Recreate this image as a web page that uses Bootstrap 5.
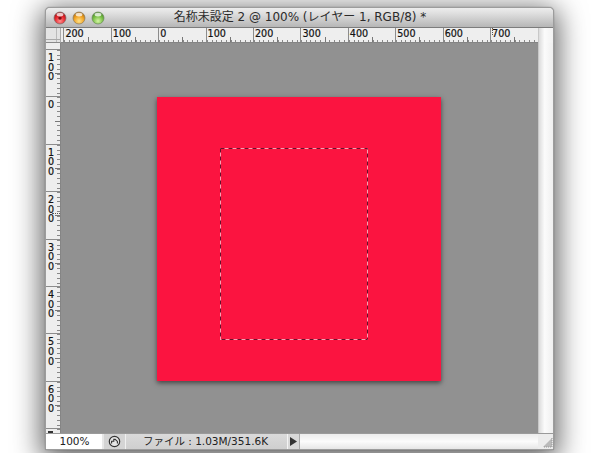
<!DOCTYPE html>
<html lang="ja">
<head>
<meta charset="utf-8">
<title>名称未設定 2</title>
<link href="https://cdn.jsdelivr.net/npm/bootstrap@5.3.0/dist/css/bootstrap.min.css" rel="stylesheet">
<style>
html,body{height:453px;overflow:hidden;background:#fff}
body{font-family:"DejaVu Sans","Noto Sans CJK JP",sans-serif;color:#222}
.ps-win{width:509px;height:443px;margin:7px 0 0 45px;background:#ececec;border-radius:5px 5px 2px 2px;border:1px solid #9c9c9c;box-shadow:0 6px 28px 4px rgba(0,0,0,.62),0 0 1px rgba(0,0,0,.5);position:relative}
.ps-title{height:20px;flex:none;background:linear-gradient(#ededed,#dedede 30%,#b6b6b6);border-bottom:1px solid #7c7c7c;border-radius:4px 4px 0 0;position:relative;font-size:12px;line-height:19px;color:#2b2b2b;text-align:center;padding-left:1px}
.ps-lights{position:absolute;left:7px;top:3px;gap:5px}
.ps-toprow{height:15px;flex:none;background:#ededed}
.ps-corner{width:15px;flex:none;border-right:1px solid #aaa;border-bottom:1px solid #8a8a8a;background:linear-gradient(#aaa,#aaa) 0 11px/15px 1px no-repeat,linear-gradient(#bbb,#bbb) 10px 0/1px 15px no-repeat,#e4e4e4}
.ps-hruler{flex:1 1 auto;overflow:hidden;padding-left:2.4px;border-bottom:1px solid #858585;background:#eeeeee;position:relative}
.ps-hcell{flex:0 0 47.42px;border-left:1px solid #8c8c8c;height:14px;font-size:9.6px;line-height:11px;padding-left:1px;color:#111;-webkit-text-stroke:.2px #111;background:linear-gradient(#777,#777) 23.2px 100%/1px 5px no-repeat,repeating-linear-gradient(90deg,#888 0 1px,transparent 1px 4.742px) 0 100%/100% 2px no-repeat}
.ps-rightcap{width:15px;flex:none;background:linear-gradient(90deg,#dcdcdc,#fbfbfb 40%,#f2f2f2);border-left:1px solid #c8c8c8}
.ps-mid{flex:1 1 auto;min-height:0}
.ps-vruler{width:15px;flex:none;overflow:hidden;background:#eeeeee;border-right:1px solid #858585;position:relative}
.ps-vcell{flex:0 0 47.42px;border-top:1px solid #8c8c8c;font-size:9.6px;line-height:9.6px;padding:3px 0 0 2px;color:#111;-webkit-text-stroke:.2px #111;background:linear-gradient(#777,#777) 100% 23.2px/5px 1px no-repeat,repeating-linear-gradient(#888 0 1px,transparent 1px 4.742px) 100% 0/3px 100% no-repeat}
.ps-vfirst{margin-top:6px}
.ps-seven{width:5px;height:2px;background:#333;margin-top:-1px}
.ps-canvas{flex:1 1 auto;background:#919191;padding:54px 0 0 96px;min-width:0}
.ps-art{width:284px;height:284px;background:#fb1440;box-shadow:0 2px 5px rgba(0,0,0,.55);padding:51px 0 0 63px}
.ps-marquee{width:148px;height:192px;display:block}
.ps-scroll{width:15px;flex:none;background:linear-gradient(90deg,#dcdcdc,#fbfbfb 40%,#f0f0f0);border-left:1px solid #c8c8c8}
.ps-status{height:16px;flex:none;background:#f0f0f0;border-top:1px solid #9a9a9a;font-size:10.5px;line-height:15px;color:#222}
.ps-zoomcell{width:56px;background:#fff;text-align:center;padding-left:1px}
.ps-gap{width:2px;background:#e8e8e8}
.ps-iconcell{width:21px;background:#d4d4d4}
.ps-filecell{width:161px;background:linear-gradient(#dadada,#cfcfcf);text-align:center;margin-left:1px;padding-right:2px}
.ps-arrowcell{width:13px;background:#d8d8d8;border-left:1px solid #f4f4f4;border-right:1px solid #aaa}
.ps-track{flex:1 1 auto;background:linear-gradient(#ececec,#fbfbfb 50%,#e6e6e6)}
.ps-grip{width:15px;flex:none;background:#ececec}
.ps-vmark{position:absolute;right:0;top:170px;width:8px;border-top:1px dotted #555}
.ps-hmark{position:absolute;left:431px;top:0;height:7px;border-left:1px dotted #555}
</style>
</head>
<body>
<div class="ps-win d-flex flex-column">
  <div class="ps-title">
    <div class="ps-lights d-flex">
      <svg width="14" height="14" viewBox="0 0 14 14"><defs><radialGradient id="lr" cx=".5" cy=".75" r=".7"><stop offset="0" stop-color="#ff8f8f"/><stop offset=".6" stop-color="#e8252b"/><stop offset="1" stop-color="#9e1518"/></radialGradient><radialGradient id="ly" cx=".5" cy=".75" r=".7"><stop offset="0" stop-color="#ffe28a"/><stop offset=".6" stop-color="#f0a223"/><stop offset="1" stop-color="#b06f12"/></radialGradient><radialGradient id="lg" cx=".5" cy=".75" r=".7"><stop offset="0" stop-color="#d5f5a5"/><stop offset=".6" stop-color="#78bf45"/><stop offset="1" stop-color="#4c8a2c"/></radialGradient></defs><circle cx="7" cy="7" r="6" fill="url(#lr)" stroke="#7d6a6a" stroke-width=".7"/><circle cx="7" cy="7" r="1.7" fill="#7d1014"/><ellipse cx="7" cy="3.6" rx="3.4" ry="1.9" fill="#fff" opacity=".75"/></svg>
      <svg width="14" height="14" viewBox="0 0 14 14"><circle cx="7" cy="7" r="6" fill="url(#ly)" stroke="#8a7a5c" stroke-width=".7"/><ellipse cx="7" cy="3.6" rx="3.4" ry="1.9" fill="#fff" opacity=".75"/></svg>
      <svg width="14" height="14" viewBox="0 0 14 14"><circle cx="7" cy="7" r="6" fill="url(#lg)" stroke="#6c8a5c" stroke-width=".7"/><ellipse cx="7" cy="3.6" rx="3.4" ry="1.9" fill="#fff" opacity=".75"/></svg>
    </div>
    名称未設定 2 @ 100% (レイヤー 1, RGB/8) *
  </div>
  <div class="ps-toprow d-flex">
    <div class="ps-corner"></div>
    <div class="ps-hruler d-flex">
      <div class="ps-hcell">200</div><div class="ps-hcell">100</div><div class="ps-hcell">0</div><div class="ps-hcell">100</div><div class="ps-hcell">200</div><div class="ps-hcell">300</div><div class="ps-hcell">400</div><div class="ps-hcell">500</div><div class="ps-hcell">600</div><div class="ps-hcell">700</div>
      <div class="ps-hmark"></div>
    </div>
    <div class="ps-rightcap"></div>
  </div>
  <div class="ps-mid d-flex">
    <div class="ps-vruler d-flex flex-column">
      <div class="ps-vcell ps-vfirst">1<br>0<br>0</div>
      <div class="ps-vcell">0</div>
      <div class="ps-vcell">1<br>0<br>0</div>
      <div class="ps-vcell">2<br>0<br>0</div>
      <div class="ps-vcell">3<br>0<br>0</div>
      <div class="ps-vcell">4<br>0<br>0</div>
      <div class="ps-vcell">5<br>0<br>0</div>
      <div class="ps-vcell">6<br>0<br>0</div>
      <div class="ps-vcell"><div class="ps-seven"></div></div>
      <div class="ps-vmark"></div>
    </div>
    <div class="ps-canvas">
      <div class="ps-art">
        <svg class="ps-marquee" viewBox="0 0 148 192"><rect x=".5" y=".5" width="147" height="191" fill="none" stroke="#ff9db0"/><rect x=".5" y=".5" width="147" height="191" fill="none" stroke="#6a0f2a" stroke-dasharray="4 4"/></svg>
      </div>
    </div>
    <div class="ps-scroll"></div>
  </div>
  <div class="ps-status d-flex">
    <div class="ps-zoomcell">100%</div>
    <div class="ps-gap"></div>
    <div class="ps-iconcell d-flex align-items-center justify-content-center">
      <svg width="13" height="13" viewBox="0 0 13 13"><circle cx="6.5" cy="6.5" r="5.2" fill="#e6e6e6" stroke="#333" stroke-width="1.2"/><path d="M3.6 8.6V6.2h2.2V4.4h1.4l2.2 2v2.2" fill="none" stroke="#333" stroke-width="1.1"/></svg>
    </div>
    <div class="ps-filecell">ファイル : 1.03M/351.6K</div>
    <div class="ps-arrowcell d-flex align-items-center justify-content-center">
      <svg width="7" height="9" viewBox="0 0 7 9"><path d="M0 0l7 4.5L0 9z" fill="#333"/></svg>
    </div>
    <div class="ps-track"></div>
    <div class="ps-grip d-flex align-items-end justify-content-end">
      <svg width="13" height="13" viewBox="0 0 13 13"><path d="M12 2v9H3z" fill="#aaa" opacity=".75"/><path d="M12 2v9H3" fill="none" stroke="#999" stroke-dasharray="1 1"/></svg>
    </div>
  </div>
</div>
</body>
</html>
